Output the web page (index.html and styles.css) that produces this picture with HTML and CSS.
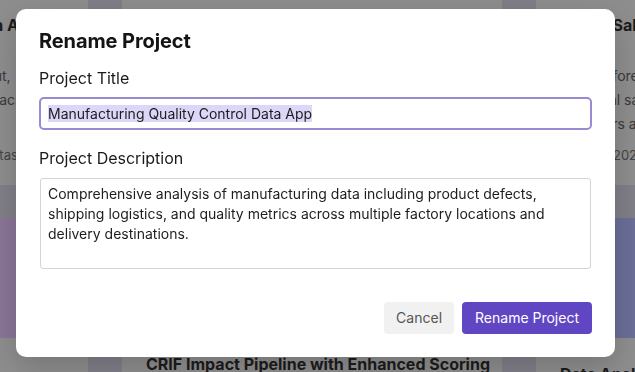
FILE: index.html
```html
<!DOCTYPE html>
<html lang="en">
<head>
<meta charset="utf-8">
<title>Rename Project</title>
<link rel="stylesheet" href="styles.css">
</head>
<body>
<div class="page">
  <div class="grid">
    <div class="card card-top card-left">
      <div class="card-title">Production Line Optimization Analysis</div>
      <div class="card-desc">Structured study of manufacturing output, shipping throughput and quality metrics across factory locations and teams.</div>
      <div class="card-foot">4 datasets · Updated Mar 12</div>
    </div>
    <div class="card card-top">
      <div class="card-title">Manufacturing Quality Control Data App</div>
      <div class="card-desc">Comprehensive analysis of manufacturing data including product defects, shipping logistics, and quality metrics.</div>
      <div class="card-foot">3 datasets · Updated Mar 14</div>
    </div>
    <div class="card card-top card-right">
      <div class="card-title">Retail Sales Forecast</div>
      <div class="card-desc">Weekly forecasting of store revenue using historical sales and pricing trends, holiday calendars and regional promotions.</div>
      <div class="card-foot">Feb 12, 2024</div>
    </div>
    <div class="card card-bottom">
      <div class="thumb thumb-purple"></div>
    </div>
    <div class="card card-bottom">
      <div class="thumb thumb-mid"></div>
      <div class="card-body"><div class="card-title">CRIF Impact Pipeline with Enhanced Scoring</div></div>
    </div>
    <div class="card card-bottom">
      <div class="thumb thumb-blue"></div>
      <div class="card-body card-body-low"><div class="card-title">Data Analysis Workspace</div></div>
    </div>
  </div>
</div>

<div class="backdrop">
  <div class="dialog" role="dialog" aria-labelledby="dlg-title">
    <h2 class="dialog-title" id="dlg-title">Rename Project</h2>
    <div class="field-label">Project Title</div>
    <div class="text-input"><span class="selected">Manufacturing Quality Control Data App</span></div>
    <div class="field-label field-label-second">Project Description</div>
    <textarea class="text-area" readonly>Comprehensive analysis of manufacturing data including product defects, shipping logistics, and quality metrics across multiple factory locations and delivery destinations.</textarea>
    <div class="actions">
      <button class="btn btn-cancel" type="button">Cancel</button>
      <button class="btn btn-primary" type="button">Rename Project</button>
    </div>
  </div>
</div>
</body>
</html>
```

FILE: styles.css
```css
* { box-sizing: border-box; }

html, body {
  margin: 0;
  padding: 0;
  width: 635px;
  height: 372px;
  overflow: hidden;
}

body {
  font-family: Inter, "Noto Sans", "Liberation Sans", sans-serif;
  background: #817f88;
  color: #111;
}

.page {
  width: 635px;
  height: 372px;
  overflow: hidden;
}

.grid {
  display: grid;
  grid-template-columns: repeat(3, 380px);
  column-gap: 34px;
  row-gap: 33px;
  margin-left: -292px;
}

.card {
  background: #8e8e8e;
  overflow: hidden;
}

.card-top {
  height: 185px;
  padding: 13px 24px 0 24px;
  display: flex;
  flex-direction: column;
}

.card-title {
  font-size: 16px;
  font-weight: 700;
  line-height: 24px;
  color: #1c1c1c;
  white-space: nowrap;
}

.card-left .card-title { margin-left: 45px; }
.card-left .card-foot { margin-left: 240px; }
.card-right .card-title { margin-left: 5px; }
.card-right .card-foot { margin-left: 6px; }

.card-desc {
  margin-top: 27px;
  font-size: 14px;
  line-height: 24px;
  color: #3a3a3a;
  height: 72px;
  overflow: hidden;
}

.card-foot {
  margin-top: 9px;
  font-size: 13px;
  line-height: 20px;
  color: #444;
  white-space: nowrap;
}

.card-bottom {
  height: 200px;
}

.thumb { height: 120px; }
.thumb-purple { background: #8a7597; }
.thumb-mid { background: #857a99; }
.thumb-blue { background: #6b6e97; }

.card-body { padding: 14px 24px 0 24px; }
.card-body-low { padding-top: 24px; }

/* dialog */
.backdrop {
  position: fixed;
  inset: 0;
  padding: 9px 0 0 16px;
}

.dialog {
  width: 599px;
  background: #fff;
  border-radius: 10px;
  padding: 20px 23px 23px 23px;
  box-shadow: 0 10px 30px rgba(0, 0, 0, 0.18);
  display: flex;
  flex-direction: column;
}

.dialog-title {
  margin: 0;
  font-size: 20px;
  line-height: 24px;
  font-weight: 700;
  color: #141414;
  letter-spacing: -0.1px;
}

.field-label {
  margin-top: 13px;
  font-size: 16px;
  line-height: 24px;
  color: #1a1a1a;
}

.field-label-second { margin-top: 16px; }

.text-input {
  margin-top: 7px;
  height: 33px;
  border: 2px solid #9b89d1;
  border-radius: 5px;
  padding: 0 7px;
  display: flex;
  align-items: center;
  font-size: 14px;
  color: #1d1d1d;
}

.selected {
  background: #dcd6f8;
  line-height: 17px;
}

.text-area {
  display: block;
  margin: 8px 1px 0 1px;
  height: 91px;
  width: calc(100% - 2px);
  border: 1px solid #d4d4d4;
  border-radius: 3px;
  padding: 5px 7px;
  font-family: inherit;
  font-size: 14px;
  line-height: 20px;
  color: #1d1d1d;
  resize: none;
  outline: none;
  overflow: hidden;
  background: #fff;
}

.actions {
  margin-top: 33px;
  display: flex;
  justify-content: flex-end;
  gap: 8px;
}

.btn {
  height: 32px;
  padding: 0 12px;
  border: none;
  border-radius: 4px;
  font-family: inherit;
  font-size: 14px;
  line-height: 32px;
  cursor: pointer;
}

.btn-cancel {
  background: #f1f1f1;
  color: #555;
}

.btn-primary {
  padding: 0 13px;
  background: #6146c4;
  color: #fff;
}
```
